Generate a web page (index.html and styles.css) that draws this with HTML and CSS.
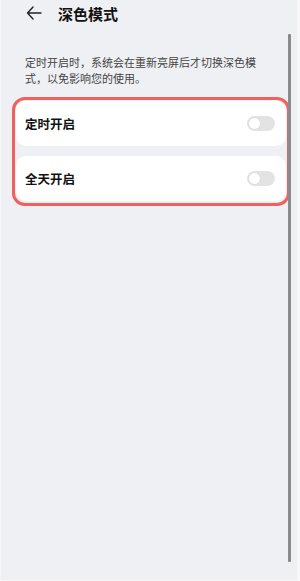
FILE: index.html
```html
<!DOCTYPE html>
<html lang="zh">
<head>
<meta charset="utf-8">
<link rel="stylesheet" href="styles.css">
</head>
<body>
<div class="screen">
  <header class="topbar">
    <svg class="back" width="16" height="14" viewBox="0 0 16 14"><path d="M7 1 L1.5 7 L7 13 M1.5 7 H15" fill="none" stroke="#222" stroke-width="1.4" stroke-linecap="round" stroke-linejoin="round"/></svg>
    <h1 class="title">深色模式</h1>
  </header>
  <p class="desc">定时开启时，系统会在重新亮屏后才切换深色模式，以免影响您的使用。</p>
  <div class="group">
    <div class="card">
      <span class="label">定时开启</span>
      <span class="toggle"><span class="knob"></span></span>
    </div>
    <div class="card">
      <span class="label">全天开启</span>
      <span class="toggle"><span class="knob"></span></span>
    </div>
  </div>
  <div class="scrollbar"></div>
</div>
</body>
</html>
```
FILE: styles.css
```css
* { box-sizing: border-box; }
html, body { margin: 0; padding: 0; }
body {
  width: 300px;
  height: 581px;
  background: #eff0f4;
  font-family: "Noto Sans CJK SC", "Noto Sans", sans-serif;
  overflow: hidden;
}
.screen {
  position: relative;
  width: 300px;
  height: 581px;
  border-left: 1px solid #f7f7f9;
  border-bottom: 1px solid #f7f7f9;
  border-right: 3px solid #f8f8fa;
}
.topbar {
  display: flex;
  align-items: center;
  height: 28px;
  padding-left: 25px;
}
.back { margin-top: -2px; }
.title {
  margin: 0 0 0 16px;
  font-size: 15px;
  font-weight: 700;
  color: #111;
  line-height: 20px;
}
.desc {
  margin: 26px 30px 0 24px;
  font-size: 11px;
  line-height: 16px;
  color: #444;
}
.group {
  margin: 11px 0 0 11px;
  width: 278px;
  border: 3px solid #f25f5f;
  border-radius: 13px;
  padding: 1px 1px 2px 1px;
  display: flex;
  flex-direction: column;
  gap: 10px;
}
.card {
  background: #fff;
  border-radius: 10px;
  height: 45px;
  display: flex;
  align-items: center;
  justify-content: space-between;
  padding: 0 11px 0 9px;
}
.label {
  font-size: 12.5px;
  font-weight: 700;
  color: #111;
}
.toggle {
  width: 28px;
  height: 15px;
  border-radius: 8px;
  background: #e3e3e3;
  display: flex;
  align-items: center;
  padding-left: 1px;
}
.knob {
  width: 13px;
  height: 13px;
  border-radius: 50%;
  background: #fff;
  border: 1px solid #dcdcdc;
}
.scrollbar {
  position: absolute;
  left: 287px;
  top: 34px;
  width: 3px;
  height: 528px;
  background: #8a8a8a;
  border-radius: 1px;
}
```
